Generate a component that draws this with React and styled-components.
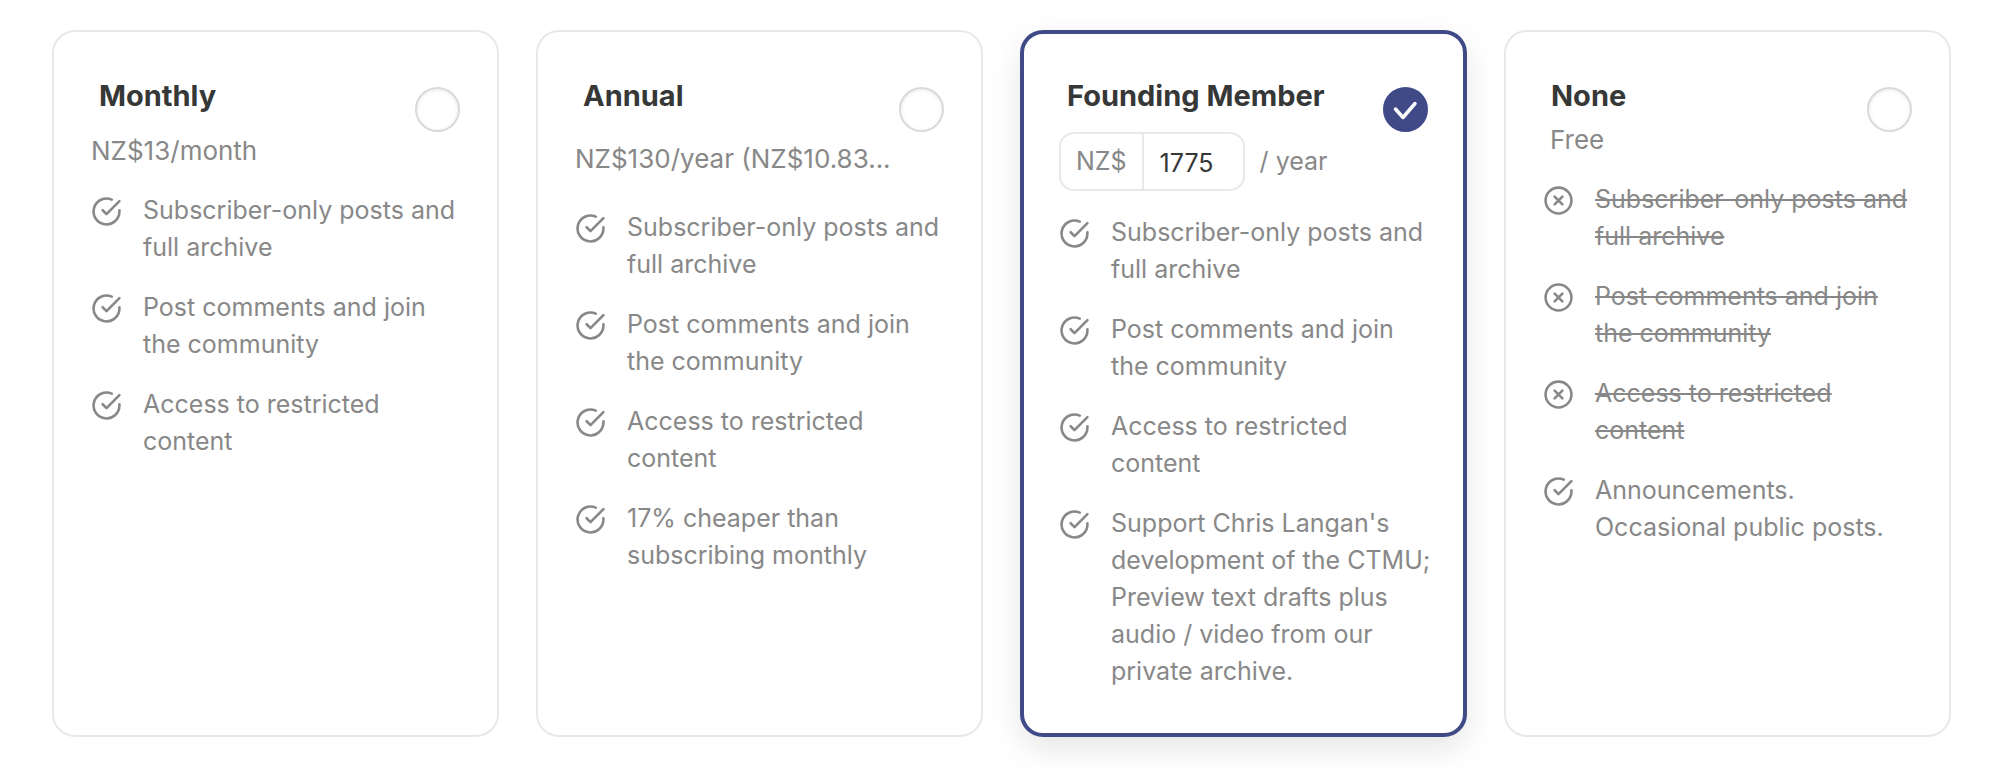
import React, { useState } from "react";
import styled, { createGlobalStyle, css } from "styled-components";

const GlobalStyle = createGlobalStyle`
    * {
        box-sizing: border-box;
    }

    body {
        margin: 0;
        background: #fff;
        color: #888;
        font-family: Inter, "Liberation Sans", sans-serif;
        font-size: 25px;
        line-height: 37px;
    }
`;

const PlanGrid = styled.main`
    display: grid;
    grid-template-columns: repeat(4, minmax(0, 1fr));
    gap: 37px;
    padding: 30px 48px 32px 52px;
`;

const Card = styled.section`
    min-width: 0;
    padding: 44px 29px 45px 37px;
    border: 2px solid #e8e8e8;
    border-radius: 23px;
    background: #fff;

    ${(props) => props.$selected && css`
        padding: 42px 27px 43px 35px;
        border: 4px solid #3f4a87;
        box-shadow: 0 12px 32px rgba(0, 0, 0, 0.1);
    `}
`;

const CardHeader = styled.header`
    display: flex;
    align-items: flex-start;
    gap: 4px;
    padding-right: 8px;
    margin-bottom: 23px;
`;

const Heading = styled.div`
    flex: 1;
    min-width: 0;
`;

const Title = styled.h2`
    margin: 0;
    padding-left: 8px;
    color: #363737;
    font-size: 29px;
    font-weight: 700;
    line-height: 40px;
    white-space: nowrap;
`;

const Price = styled.p`
    margin: ${(props) => (props.$free ? "5px 0 0 7px" : "16px 0 0")};
    font-size: 26px;
    line-height: ${(props) => (props.$tall ? "54px" : "37px")};
    white-space: nowrap;
`;

const AmountRow = styled.div`
    display: flex;
    align-items: center;
    gap: 15px;
    margin-top: 16px;
    white-space: nowrap;
`;

const AmountBox = styled.div`
    display: flex;
    height: 59px;
    border: 2px solid #e8e8e8;
    border-radius: 15px;
    overflow: hidden;
`;

const Currency = styled.label`
    display: flex;
    align-items: center;
    padding: 0 15px;
    border-right: 2px solid #e8e8e8;
`;

const AmountInput = styled.input`
    width: 99px;
    padding: 3px 16px 0;
    border: 0;
    outline: none;
    background: none;
    color: #363737;
    font: inherit;
`;

const RadioWrap = styled.div`
    display: grid;
    flex: none;
    margin-top: 11px;

    > * {
        grid-area: 1 / 1;
    }
`;

const Radio = styled.input`
    width: 45px;
    height: 45px;
    margin: 0;
    appearance: none;
    border: 2px solid #d9d9d9;
    border-radius: 50%;
    background: #fff;
    box-shadow: inset 0 1px 4px rgba(0, 0, 0, 0.08);
    cursor: pointer;

    &:checked {
        border-color: #3f4a87;
        background: #3f4a87;
        box-shadow: none;
    }
`;

const RadioTick = styled.svg`
    width: 45px;
    height: 45px;
    pointer-events: none;
`;

const FeatureList = styled.ul`
    display: flex;
    flex-direction: column;
    gap: 23px;
    margin: 0;
    padding: 0;
    list-style: none;
`;

const Feature = styled.li`
    display: flex;
    align-items: flex-start;
    gap: 21px;
    text-decoration: ${(props) => (props.$excluded ? "line-through" : "none")};
    text-decoration-thickness: 2px;
`;

const FeatureIcon = styled.svg`
    flex: none;
    width: 31px;
    height: 31px;
    margin-top: 4px;
    fill: none;
    stroke: currentColor;
    stroke-width: 2;
    stroke-linecap: round;
    stroke-linejoin: round;
`;

const IncludedIcon = () => (
    <FeatureIcon viewBox="0 0 24 24" aria-hidden="true">
        <path d="M22 11.08V12a10 10 0 1 1-5.93-9.14" />
        <path d="M22 4 12 14.01l-3-3" />
    </FeatureIcon>
);

const ExcludedIcon = () => (
    <FeatureIcon viewBox="0 0 24 24" aria-hidden="true">
        <circle cx="12" cy="12" r="10" />
        <path d="m9 9 6 6M15 9l-6 6" />
    </FeatureIcon>
);

const sharedFeatures = [
    "Subscriber-only posts and full archive",
    "Post comments and join the community",
    "Access to restricted content",
];

const plans = [
    {
        id: "monthly",
        name: "Monthly",
        price: "NZ$13/month",
        features: sharedFeatures,
    },
    {
        id: "annual",
        name: "Annual",
        price: "NZ$130/year (NZ$10.83...",
        tall: true,
        features: [...sharedFeatures, "17% cheaper than subscribing monthly"],
    },
    {
        id: "founding",
        name: "Founding Member",
        editable: true,
        features: [
            ...sharedFeatures,
            "Support Chris Langan's development of the CTMU; Preview text drafts plus audio / video from our private archive.",
        ],
    },
    {
        id: "none",
        name: "None",
        price: "Free",
        free: true,
        excluded: sharedFeatures,
        features: ["Announcements. Occasional public posts."],
    },
];

function FoundingAmount() {
    const [amount, setAmount] = useState("1775");

    return (
        <AmountRow>
            <AmountBox>
                <Currency htmlFor="founding-amount">NZ$</Currency>
                <AmountInput
                    id="founding-amount"
                    type="text"
                    inputMode="numeric"
                    value={amount}
                    onChange={(e) => setAmount(e.target.value)}
                />
            </AmountBox>
            <span>/ year</span>
        </AmountRow>
    );
}

function PlanCard({ plan, selected, onSelect }) {
    const { id, name, price, tall, free, editable, features, excluded = [] } = plan;

    return (
        <Card $selected={selected}>
            <CardHeader>
                <Heading>
                    <Title>
                        <label htmlFor={id}>{name}</label>
                    </Title>
                    {editable ? (
                        <FoundingAmount />
                    ) : (
                        <Price $tall={tall} $free={free}>{price}</Price>
                    )}
                </Heading>
                <RadioWrap>
                    <Radio
                        type="radio"
                        name="plan"
                        id={id}
                        checked={selected}
                        onChange={() => onSelect(id)}
                    />
                    {selected && (
                        <RadioTick viewBox="0 0 45 45" aria-hidden="true">
                            <path
                                d="M12.5 22 20 30.5 32 16.5"
                                fill="none"
                                stroke="#fff"
                                strokeWidth="3.5"
                                strokeLinecap="round"
                                strokeLinejoin="round"
                            />
                        </RadioTick>
                    )}
                </RadioWrap>
            </CardHeader>
            <FeatureList>
                {excluded.map((text) => (
                    <Feature key={text} $excluded>
                        <ExcludedIcon />
                        <span>{text}</span>
                    </Feature>
                ))}
                {features.map((text) => (
                    <Feature key={text}>
                        <IncludedIcon />
                        <span>{text}</span>
                    </Feature>
                ))}
            </FeatureList>
        </Card>
    );
}

export default function App() {
    const [active, setActive] = useState("founding");

    return (
        <>
            <GlobalStyle />
            <PlanGrid>
                {plans.map((plan) => (
                    <PlanCard
                        key={plan.id}
                        plan={plan}
                        selected={active === plan.id}
                        onSelect={setActive}
                    />
                ))}
            </PlanGrid>
        </>
    );
}
